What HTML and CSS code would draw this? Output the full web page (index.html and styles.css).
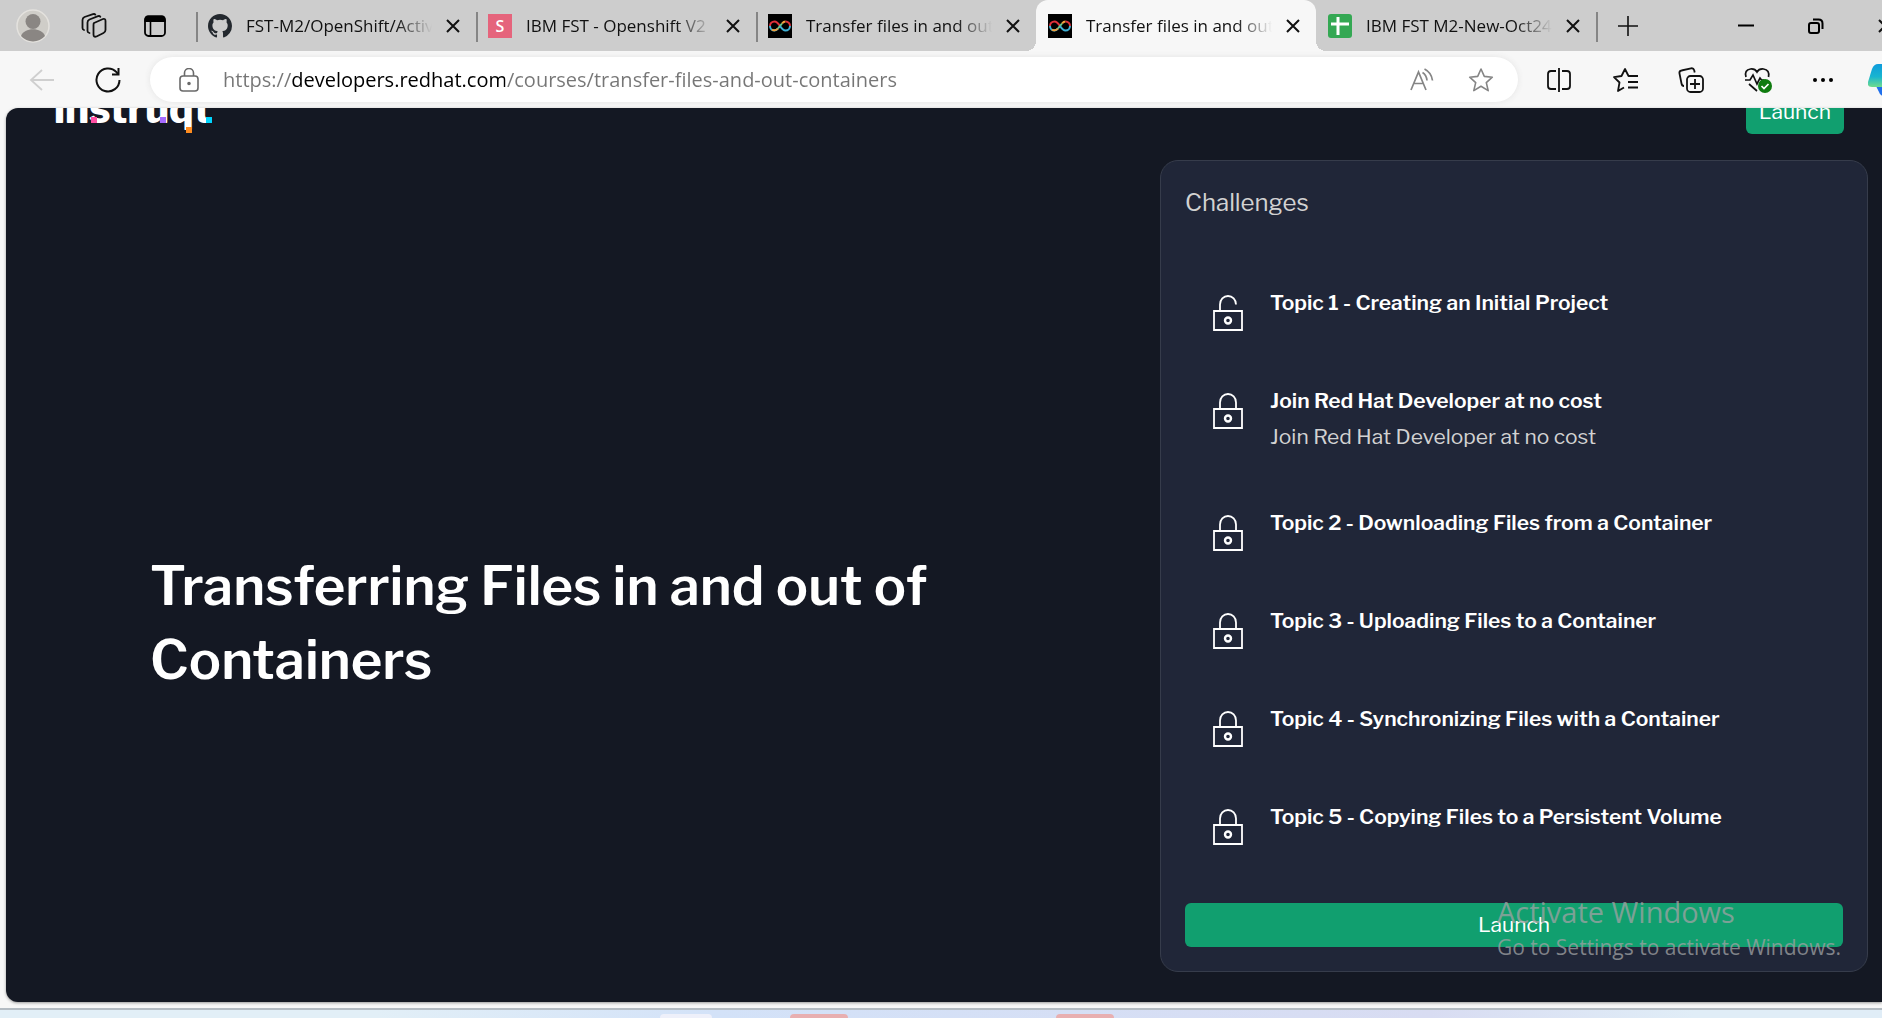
FILE: index.html
```html
<!DOCTYPE html>
<html lang="en">
<head>
<meta charset="utf-8">
<title>Transfer files in and out of containers</title>
<link rel="stylesheet" href="styles.css">
</head>
<body>
<svg class="defs" aria-hidden="true">
  <symbol id="close" viewBox="0 0 14 14"><path d="M1 1l12 12M13 1L1 13" fill="none" stroke="#111" stroke-width="2"/></symbol>
  <symbol id="loop" viewBox="0 0 24 24"><path fill="#000" d="M0 0h24v24H0z"/><g fill="none" stroke-width="2"><path d="M12 12C10 9 8.500 7.500 6.500 7.500A4.500 4.500 0 0 0 2 12" stroke="#e0313a"/><path d="M2 12a4.500 4.500 0 0 0 4.500 4.500C8 16.500 9 15.500 10 14.500" stroke="#3fb1d6"/><path d="M4 15.500c1 1 4 1.500 6-1" stroke="#f0a13c"/><path d="M10 14.500l4-5" stroke="#6fd08c"/><path d="M14 9.500c1-1.300 2-2 3.500-2" stroke="#f0a13c"/><path d="M17.500 7.500A4.500 4.500 0 0 1 22 12" stroke="#e0313a"/><path d="M22 12a4.500 4.500 0 0 1-4.500 4.500c-2 0-3.500-1.500-5.500-4.500" stroke="#3fb1d6"/></g></symbol>
  <symbol id="lock" viewBox="0 0 30 36"><g fill="none" stroke="#fff" stroke-width="1.800"><path d="M1 16h28v19H1zM7 16V9.500a8 8.500 0 0 1 16 0V16"/><circle cx="15" cy="25.500" r="3" stroke-width="2.400"/></g></symbol>
  <symbol id="unlock" viewBox="0 0 30 36"><g fill="none" stroke="#fff" stroke-width="1.800"><path d="M1 16h28v19H1zM7 16V9.500a8 8.500 0 0 1 16 0"/><circle cx="15" cy="25.500" r="3" stroke-width="2.400"/></g></symbol>
</svg>

<header class="browser">
  <div class="tabstrip">
    <div class="strip-tools">
      <button class="icon-btn" aria-label="Profile"><svg width="34" height="34" viewBox="0 0 34 34"><circle cx="17" cy="17" r="16" fill="#cfcdc8" stroke="#e4e2de" stroke-width="1.500"/><circle cx="17" cy="12.500" r="7.500" fill="#8a8683"/><path d="M5 27c3-9 21-9 24 0a16 16 0 0 1-24 0z" fill="#8a8683"/></svg></button>
      <button class="icon-btn" aria-label="Workspaces"><svg width="26" height="26" viewBox="0 0 26 26" fill="none" stroke="#111" stroke-width="1.800" stroke-linejoin="round" stroke-linecap="round"><path d="M13 10l9-4q2.500-.7 2.500 2v9q0 2-2 3l-7 3.500q-3 1-3-2V12q0-1.500.500-2z"/><path d="M8.500 20q-2-.5-2-2V9.500q0-2 2-3L17 3.200q1.500-.5 2.300.5M3 17q-1.500-.5-1.500-2V7q0-2 2-3L12 1.200q1.500-.5 2.300.4"/></svg></button>
      <button class="icon-btn" aria-label="Tab actions"><svg width="24" height="24" viewBox="0 0 24 24"><rect x="2" y="2.500" width="20" height="19.500" rx="3.500" fill="none" stroke="#000" stroke-width="1.800"/><path d="M1.500 8V5q0-3.500 3.500-3.500h14q3.500 0 3.500 3.500v3z"/><path d="M7.500 8v14" stroke="#000" stroke-width="1.600"/></svg></button>
    </div>
    <nav class="tabs" aria-label="Open tabs">
      <div class="tab"><svg class="fav" viewBox="0 0 16 16"><path fill="#24292f" d="M8 0C3.580 0 0 3.580 0 8c0 3.540 2.290 6.530 5.470 7.590.4.070.55-.17.55-.38v-1.490c-2.010.37-2.530-.49-2.690-.94-.09-.23-.48-.94-.82-1.130-.28-.15-.68-.52-.01-.53.63-.01 1.080.58 1.230.82.72 1.210 1.870.87 2.330.66.07-.52.28-.87.51-1.070-1.780-.2-3.640-.89-3.640-3.950 0-.87.31-1.590.82-2.150-.08-.2-.36-1.020.08-2.120 0 0 .67-.21 2.200.82a7.600 7.600 0 0 1 4 0c1.530-1.040 2.200-.82 2.200-.82.44 1.100.16 1.920.08 2.120.51.560.82 1.270.82 2.150 0 3.070-1.870 3.750-3.650 3.950.29.250.54.730.54 1.480v2.200c0 .21.150.46.550.38A8 8 0 0 0 16 8c0-4.420-3.580-8-8-8z"/></svg><a class="tab-title" href="#">FST-M2/OpenShift/Activity</a><button class="tab-close" aria-label="Close tab"><svg width="14" height="14"><use href="#close"/></svg></button></div>
      <div class="tab"><span class="fav fav-s">S</span><a class="tab-title" href="#">IBM FST - Openshift V2</a><button class="tab-close" aria-label="Close tab"><svg width="14" height="14"><use href="#close"/></svg></button></div>
      <div class="tab"><svg class="fav"><use href="#loop"/></svg><a class="tab-title" href="#">Transfer files in and out of</a><button class="tab-close" aria-label="Close tab"><svg width="14" height="14"><use href="#close"/></svg></button></div>
      <div class="tab active"><svg class="fav"><use href="#loop"/></svg><a class="tab-title" href="#" aria-current="page">Transfer files in and out of</a><button class="tab-close" aria-label="Close tab"><svg width="14" height="14"><use href="#close"/></svg></button></div>
      <div class="tab"><svg class="fav" viewBox="0 0 24 24"><rect width="24" height="24" rx="3" fill="#34a853"/><path d="M3 10h18M10 3v18" stroke="#fff" stroke-width="3"/></svg><a class="tab-title" href="#">IBM FST M2-New-Oct24-</a><button class="tab-close" aria-label="Close tab"><svg width="14" height="14"><use href="#close"/></svg></button></div>
    </nav>
    <button class="icon-btn new-tab" aria-label="New tab"><svg width="22" height="22" viewBox="0 0 22 22"><path d="M11 1v20M1 11h20" stroke="#111" stroke-width="1.600"/></svg></button>
    <div class="window-controls">
      <button class="icon-btn" aria-label="Minimize"><svg width="16" height="16" viewBox="0 0 16 16"><path d="M0 7.500h16" stroke="#000" stroke-width="2"/></svg></button>
      <button class="icon-btn" aria-label="Restore"><svg width="16" height="16" viewBox="0 0 16 16" fill="none" stroke="#000" stroke-width="2"><rect x="1" y="5" width="10" height="10" rx="2"/><path d="M5 1.500h5.500q4 0 4 4V11"/></svg></button>
      <button class="icon-btn" aria-label="Close"><svg width="14" height="14"><use href="#close"/></svg></button>
    </div>
  </div>

  <div class="toolbar">
    <button class="icon-btn" aria-label="Back"><svg width="26" height="24" viewBox="0 0 26 24"><path d="M13 2L2 12l11 10M2 12h23" fill="none" stroke="#cfcfcf" stroke-width="1.800"/></svg></button>
    <button class="icon-btn" aria-label="Refresh"><svg width="26" height="26" viewBox="0 0 26 26" fill="none" stroke="#111" stroke-width="2"><path d="M24.500 13A11.500 11.500 0 1 1 21.500 5.200L23 7"/><path d="M23.500 1v6.500H17"/></svg></button>
    <form class="address">
      <svg width="20" height="24" viewBox="0 0 20 24" fill="none" stroke="#6a6a6a" stroke-width="1.600"><rect x="1" y="8" width="18" height="15" rx="3"/><path d="M5.500 8V5a4.500 4.500 0 0 1 9 0v3"/><circle cx="10" cy="15.500" r="1" fill="#6a6a6a"/></svg>
      <input class="url" type="text" aria-label="Address" value="https://developers.redhat.com/courses/transfer-files-and-out-containers">
      <button class="icon-btn" type="button" aria-label="Read aloud"><svg width="24" height="24" viewBox="0 0 24 24" fill="none" stroke="#858585" stroke-width="1.700"><path d="M1 22L8.500 4 16 22M4 15.500h9"/><path d="M12.500 4.500q4 2.500 4.500 8M14.500 1q7 3.500 8 11.500"/></svg></button>
      <button class="icon-btn" type="button" aria-label="Add to favorites"><svg width="26" height="26" viewBox="0 0 26 26"><path d="M13 2l3.300 7.400 8 .8-6 5.400 1.900 8-7.200-4.300-7.200 4.300 1.900-8-6-5.400 8-.8z" fill="none" stroke="#858585" stroke-width="1.600" stroke-linejoin="round"/></svg></button>
    </form>
    <div class="actions">
      <button class="icon-btn" aria-label="Split screen"><svg width="26" height="26" viewBox="0 0 26 26" fill="none" stroke="#111" stroke-width="1.800"><path d="M10 4H5Q2 4 2 7v12q0 3 3 3h5M16 4h5q3 0 3 3v12q0 3-3 3h-5M13 1v24"/></svg></button>
      <button class="icon-btn" aria-label="Favorites"><svg width="26" height="26" viewBox="0 0 26 26" fill="none" stroke="#111" stroke-width="1.800" stroke-linejoin="round"><path d="M21 9h-4.500L13 2 9.500 9 2 10.200l5.500 5.300L6 24l6-3.500M17 9h9M16 15h10M16 20.500h10"/></svg></button>
      <button class="icon-btn" aria-label="Collections"><svg width="26" height="26" viewBox="0 0 26 26" fill="none" stroke="#111" stroke-width="1.800"><path d="M6 19q-2 0-2.500-2.500L1.500 6.500Q1 4 3.500 3.500L13 1.300q2.500-.5 3.200 2l.5 2.200"/><rect x="9" y="9" width="16" height="16" rx="3.500"/><path d="M17 12v10M12 17h10"/></svg></button>
      <button class="icon-btn" aria-label="Browser essentials"><svg width="28" height="26" viewBox="0 0 28 26"><path d="M2 10Q0 3 6.500 2 11 1.500 13 5q2-3.500 6.500-3Q26 3 24.500 10M1 13h5l3-5 4 9 3-6 1.500 2H20M5 17l8 7" fill="none" stroke="#111" stroke-width="1.700"/><circle cx="21" cy="19" r="7" fill="#0f7b0f"/><path d="M17.500 19l2.500 2.500 4.500-4.500" fill="none" stroke="#fff" stroke-width="1.700"/></svg></button>
      <button class="icon-btn" aria-label="Settings and more"><svg width="22" height="22" viewBox="0 0 22 22"><circle cx="3" cy="11" r="2"/><circle cx="11" cy="11" r="2"/><circle cx="19" cy="11" r="2"/></svg></button>
      <button class="icon-btn copilot" aria-label="Copilot"><svg width="36" height="32" viewBox="0 0 36 32"><defs><linearGradient id="cp" x2="0" y2="1"><stop offset="0" stop-color="#0f9bdc"/><stop offset=".55" stop-color="#18b5d0"/><stop offset="1" stop-color="#6fdc8c"/></linearGradient></defs><path d="M8 22h14v10h-6q-4 0-5-4z" fill="#1f6feb"/><path d="M10 0h15v23H4q-5 0-4-5l4-13q2-5 6-5z" fill="url(#cp)"/></svg></button>
    </div>
  </div>
</header>

<main class="page">
  <div class="site-header">
    <a class="logo" href="#" aria-label="instruqt">instruqt<i class="dot pink"></i><i class="dot purple"></i><i class="dot orange"></i><i class="dot cyan"></i></a>
    <button class="launch">Launch</button>
  </div>
  <div class="content">
    <section class="hero"><h1>Transferring Files in and out of Containers</h1></section>
    <section class="panel">
      <h2>Challenges</h2>
      <ul class="challenges">
        <li><svg class="lock"><use href="#unlock"/></svg><div><h3>Topic 1 - Creating an Initial Project</h3></div></li>
        <li><svg class="lock"><use href="#lock"/></svg><div><h3>Join Red Hat Developer at no cost</h3><p>Join Red Hat Developer at no cost</p></div></li>
        <li><svg class="lock"><use href="#lock"/></svg><div><h3>Topic 2 - Downloading Files from a Container</h3></div></li>
        <li><svg class="lock"><use href="#lock"/></svg><div><h3>Topic 3 - Uploading Files to a Container</h3></div></li>
        <li><svg class="lock"><use href="#lock"/></svg><div><h3>Topic 4 - Synchronizing Files with a Container</h3></div></li>
        <li><svg class="lock"><use href="#lock"/></svg><div><h3>Topic 5 - Copying Files to a Persistent Volume</h3></div></li>
      </ul>
      <button class="launch wide">Launch</button>
    </section>
  </div>
</main>

<footer class="taskbar"><span class="task light"></span><span class="task"></span><span class="task"></span></footer>
<aside class="watermark"><strong>Activate Windows</strong><span>Go to Settings to activate Windows.</span></aside>
</body>
</html>
```
FILE: styles.css
```css
* { box-sizing: border-box; }

body {
  margin: 0;
  height: 100vh;
  display: flex;
  flex-direction: column;
  overflow: hidden;
  position: relative;
  background: #f7f7f7;
  font-family: "Libre Franklin", Inter, sans-serif;
}

h1, h2, h3, p, ul { margin: 0; padding: 0; }
button { font: inherit; border: 0; padding: 0; background: none; color: inherit; }
a { color: inherit; text-decoration: none; }
svg { display: block; flex: none; }
.defs { position: absolute; width: 0; height: 0; }
.icon-btn { display: grid; place-items: center; flex: none; }

.browser { flex: none; font-family: "Segoe UI", "Open Sans", sans-serif; }

/* Tab strip */
.tabstrip { display: flex; height: 51px; background: #cdcdcd; }
.strip-tools { display: flex; align-items: center; gap: 27px; padding-left: 16px; width: 196px; flex: none; }
.strip-tools .icon-btn { width: 34px; }
.tabs { display: flex; flex: 0 1 1400px; min-width: 0; }
.tab {
  flex: 1 1 0;
  min-width: 0;
  display: flex;
  align-items: center;
  padding: 0 16px 0 12px;
  background: linear-gradient(#858585, #858585) 0 12px / 2px 30px no-repeat;
}
.tab.active { background: #f7f7f7; border-radius: 12px 12px 0 0; position: relative; }
.tab.active::before, .tab.active::after {
  content: "";
  position: absolute;
  bottom: 0;
  width: 10px;
  height: 10px;
}
.tab.active::before { right: 100%; background: radial-gradient(circle at 0 0, transparent 10px, #f7f7f7 10px); }
.tab.active::after { left: 100%; background: radial-gradient(circle at 100% 0, transparent 10px, #f7f7f7 10px); }
.tab.active + .tab { background: none; }
.fav { width: 24px; height: 24px; flex: none; }
.fav-s { background: #e5647c; color: #fff; font-size: 16px; line-height: 24px; font-weight: 600; text-align: center; }
.tab-title {
  flex: 1;
  min-width: 0;
  margin: 0 14px;
  overflow: hidden;
  white-space: nowrap;
  font-size: 17px;
  line-height: 28px;
  color: #111;
  mask-image: linear-gradient(90deg, #000 calc(100% - 36px), transparent);
}
.tab-close { flex: none; }
.new-tab { width: 64px; background: linear-gradient(#858585, #858585) 0 12px / 2px 30px no-repeat; }
.window-controls { display: flex; align-items: center; margin-left: auto; gap: 54px; margin-right: -10px; flex: none; }

/* Toolbar */
.toolbar { display: flex; align-items: center; height: 57px; padding-left: 29px; gap: 40px; }
.address {
  flex: 1;
  min-width: 0;
  display: flex;
  align-items: center;
  height: 45px;
  margin-left: -11px;
  padding: 0 24px 0 29px;
  gap: 34px;
  background: #fff;
  border-radius: 23px;
  box-shadow: 0 0 6px #e4e4e4;
}
.url {
  flex: 1;
  min-width: 0;
  margin-left: -10px;
  padding: 0;
  border: 0;
  outline: 0;
  font: inherit;
  font-size: 20px;
  line-height: 28px;
  color: transparent;
  background: linear-gradient(90deg, #767676 68px, #000 68px, #000 282px, #767676 282px);
  background-clip: text;
}
.actions { display: flex; align-items: center; gap: 40px; margin-left: -12px; margin-right: -22px; }
.copilot { margin-left: -6px; }

/* Course page */
.page {
  flex: 1;
  min-height: 0;
  margin-left: 6px;
  margin-bottom: 6px;
  overflow: hidden;
  background: #141823;
  border-radius: 12px 0 0 12px;
  box-shadow: 0 1px 3px #999;
}
.site-header {
  display: flex;
  justify-content: space-between;
  align-items: flex-start;
  margin-top: -18px;
  padding: 0 38px 26px 48px;
}
.logo { position: relative; color: #fff; font-size: 40px; line-height: 38px; font-weight: 800; }
.dot { position: absolute; width: 6px; height: 6px; }
.pink { left: 37px; top: 27px; background: #ff4fa3; }
.purple { left: 106px; top: 27px; background: #a56bff; }
.orange { left: 132px; top: 37px; background: #ff8c1f; }
.cyan { left: 152px; top: 27px; background: #00d5ff; }
.launch {
  height: 44px;
  padding: 0 13px;
  border-radius: 6px;
  background: #119f6f;
  color: #fff;
  font-size: 21px;
  line-height: 28px;
}
.content { display: grid; grid-template-columns: minmax(0, 1154fr) minmax(0, 708fr); padding-right: 14px; }
.hero { align-self: center; padding: 113px 120px 0 144px; }
h1 { color: #fff; font-size: 54px; line-height: 74px; font-weight: 600; }
.panel {
  padding: 24px 24px;
  border: 1px solid #363c4b;
  border-radius: 18px;
  background: #202638;
}
h2 { color: #d2d2d2; font-size: 24px; line-height: 36px; font-weight: 400; }
.challenges { list-style: none; padding: 64px 28px 0; }
.challenges li { display: flex; gap: 27px; min-height: 98px; padding-bottom: 50px; }
.lock { width: 30px; height: 36px; margin-top: 10px; }
h3 { color: #fff; font-size: 21px; line-height: 36px; font-weight: 600; }
.challenges p { color: #d2d2d2; font-size: 21px; line-height: 36px; }
.wide { width: 100%; display: block; margin-top: 6px; }

.taskbar {
  flex: none;
  display: flex;
  height: 10px;
  padding: 4px 0 0 660px;
  gap: 78px;
  border-top: 2px solid #b3bbc2;
  background: linear-gradient(90deg, #e2eff7 20%, #d3e2f8 38%, #d8dcf2 76%, #e0edf7 90%);
}
.task { width: 58px; border-radius: 8px 8px 0 0; background: #e8afb0; }
.task.light { width: 52px; background: #eef0fa; }
.task:last-child { margin-left: 130px; }

/* System notice drawn over the page */
.watermark {
  position: absolute;
  right: 41px;
  bottom: 55px;
  display: flex;
  flex-direction: column;
  font-family: "Segoe UI", "Open Sans", sans-serif;
  color: rgba(160, 162, 164, .75);
  font-size: 21px;
  line-height: 32px;
  pointer-events: none;
}
.watermark strong { font-size: 29px; line-height: 38px; font-weight: 400; }
```
